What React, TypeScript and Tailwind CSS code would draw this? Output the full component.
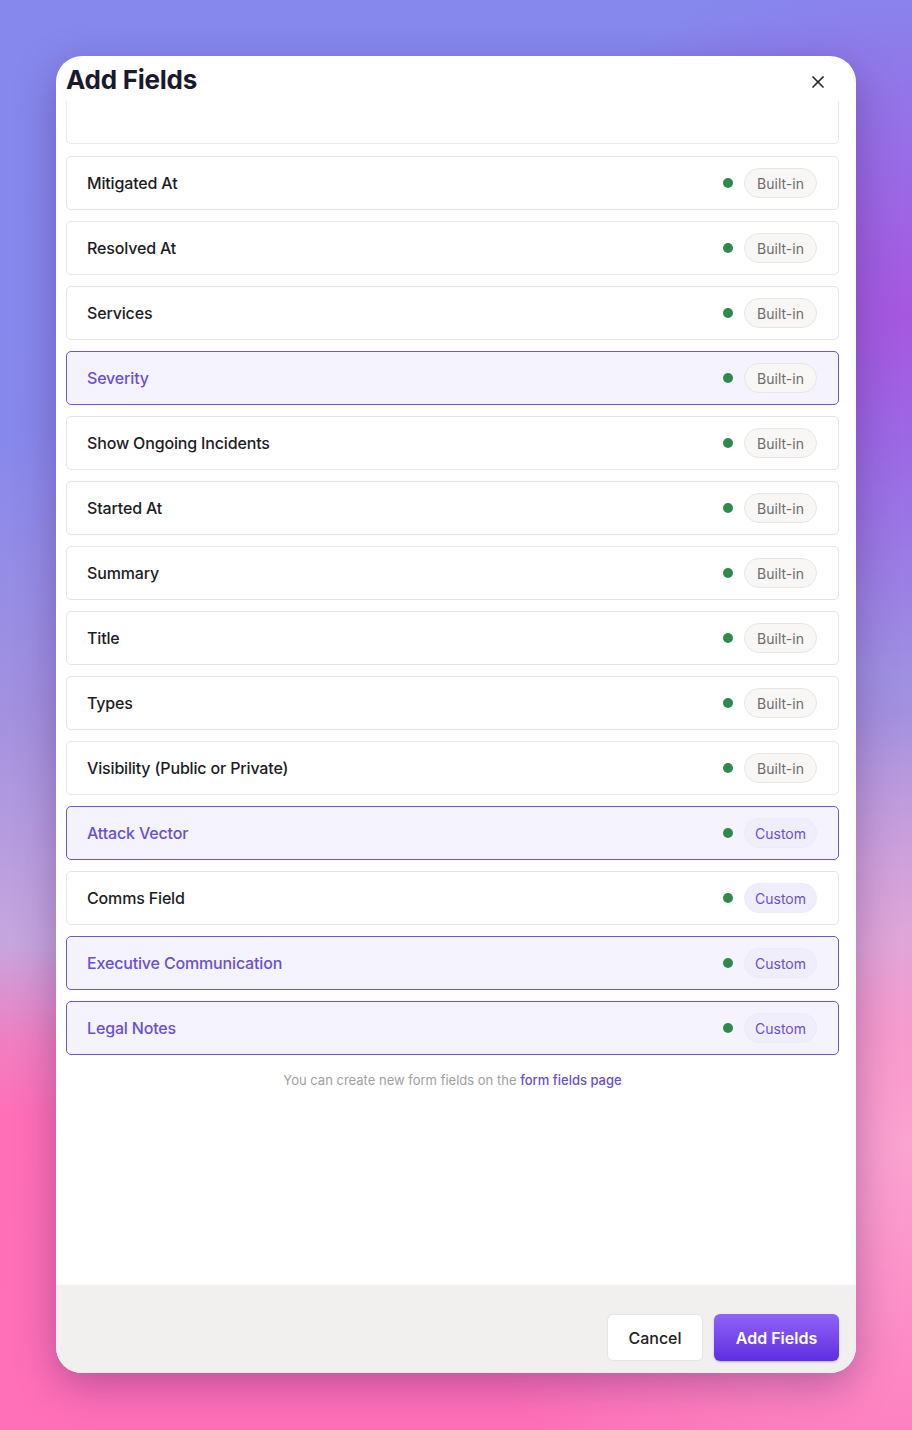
import { X } from "lucide-react";

type Field = { name: string; kind: "Built-in" | "Custom"; selected?: boolean };

const fields: Field[] = [
  { name: "Mitigated At", kind: "Built-in" },
  { name: "Resolved At", kind: "Built-in" },
  { name: "Services", kind: "Built-in" },
  { name: "Severity", kind: "Built-in", selected: true },
  { name: "Show Ongoing Incidents", kind: "Built-in" },
  { name: "Started At", kind: "Built-in" },
  { name: "Summary", kind: "Built-in" },
  { name: "Title", kind: "Built-in" },
  { name: "Types", kind: "Built-in" },
  { name: "Visibility (Public or Private)", kind: "Built-in" },
  { name: "Attack Vector", kind: "Custom", selected: true },
  { name: "Comms Field", kind: "Custom" },
  { name: "Executive Communication", kind: "Custom", selected: true },
  { name: "Legal Notes", kind: "Custom", selected: true },
];

function FieldRow({ field }: { field: Field }) {
  const rowClass = field.selected
    ? "border-[1.5px] border-[#7254cf] bg-[#f5f3fd]"
    : "border border-[#e6e4e4] bg-white";
  const nameClass = field.selected ? "text-[#6b4fd6]" : "text-[#1d1c25]";
  const badgeClass =
    field.kind === "Custom"
      ? "bg-[#f1eefb] border-[#eeebf8] text-[#6a4fd0]"
      : "bg-[#f8f7f6] border-[#e8e6e5] text-[#6d6c6c]";

  return (
    <div className={`flex h-[54px] items-center justify-between rounded-[5px] pl-5 pr-[21px] ${rowClass}`}>
      <span className={`text-[16px] font-medium tracking-[-0.01em] ${nameClass}`}>{field.name}</span>
      <div className="flex items-center gap-[11px]">
        <span className="h-[10px] w-[10px] rounded-full bg-[#2f8a4e]" />
        <span className={`flex h-[30px] w-[73px] items-center justify-center rounded-full border text-[14px] ${badgeClass}`}>
          {field.kind}
        </span>
      </div>
    </div>
  );
}

export default function App() {
  return (
    <main
      className="min-h-[1430px] w-full px-14 pt-14 pb-[57px] font-['Inter',sans-serif] bg-[radial-gradient(ellipse_45%_25%_at_100%_22%,rgba(172,78,222,0.85),transparent),radial-gradient(ellipse_55%_30%_at_100%_80%,rgba(250,166,210,0.95),transparent),linear-gradient(180deg,#8688ee_0%,#8788ec_30%,#a391df_50%,#c6a6de_66%,#f07ec0_73%,#ff6fb8_78%,#ff70b8_100%)]"
    >
      <div className="flex h-[1317px] flex-col overflow-hidden rounded-[26px] bg-white shadow-[0_12px_40px_rgba(60,20,90,0.35)]">
        <header className="flex items-start justify-between pl-[10px] pr-[28px] pt-[4px]">
          <h1 className="text-[26px] font-bold tracking-[-0.01em] text-[#1b1a2c]">Add Fields</h1>
          <button className="mt-[12px] text-[#222]">
            <X size={20} strokeWidth={2} />
          </button>
        </header>

        <div className="flex flex-1 flex-col pl-[10px] pr-[17px]">
          <div className="mt-[2px] h-[43px] rounded-b-[5px] border-x border-b border-[#ebe9e9]" />
          <div className="mt-3 flex flex-col gap-[11px]">
            {fields.map((f) => (
              <FieldRow key={f.name} field={f} />
            ))}
          </div>
          <p className="mt-[16px] text-center text-[13px] text-[#a09f9f]">
            You can create new form fields on the{" "}
            <span className="font-medium text-[#6a4fd0]">form fields page</span>
          </p>
        </div>

        <footer className="flex h-[88px] items-start justify-end gap-[11px] bg-[#f1f0ef] pr-[17px] pt-[29px]">
          <button className="h-[47px] w-[96px] rounded-[6px] border border-[#e7e5e4] bg-white text-[16px] font-medium text-[#222]">
            Cancel
          </button>
          <button className="h-[47px] w-[125px] rounded-[6px] bg-[linear-gradient(180deg,#8f64f7_0%,#5f2ee2_100%)] text-[16px] font-semibold text-white shadow-[0_1px_2px_rgba(60,20,120,0.3)]">
            Add Fields
          </button>
        </footer>
      </div>
    </main>
  );
}
